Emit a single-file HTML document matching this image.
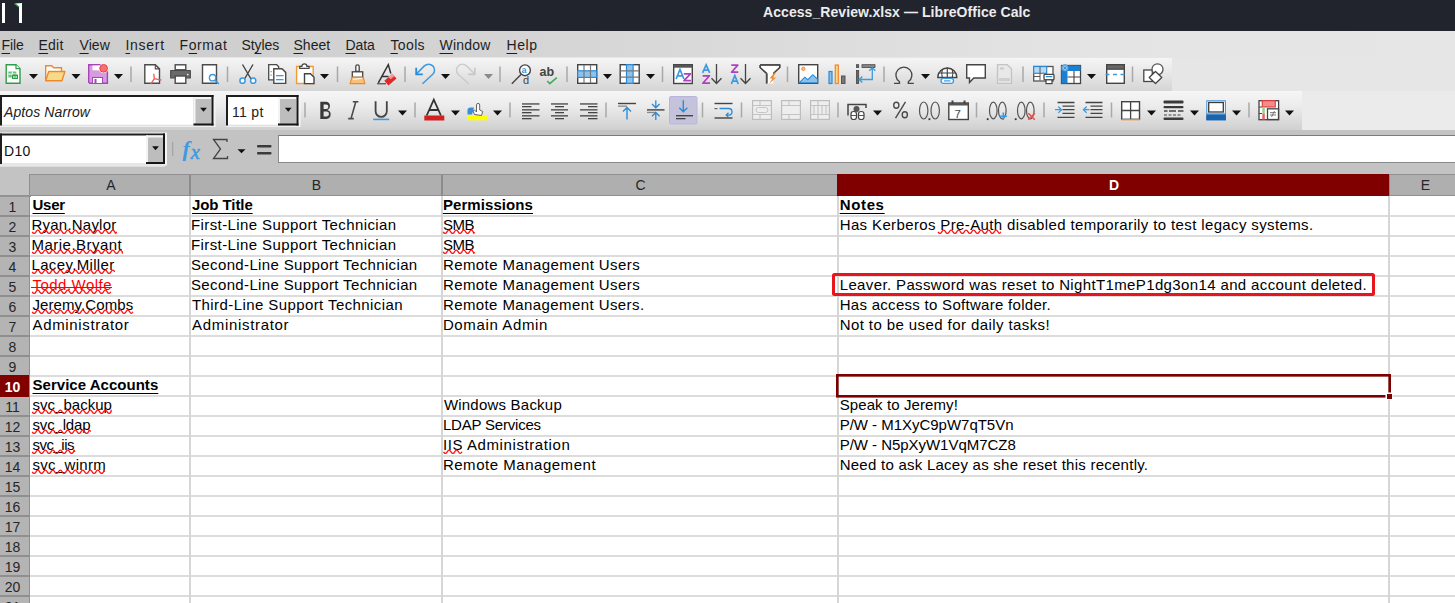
<!DOCTYPE html><html><head><meta charset="utf-8"><style>
html,body{margin:0;padding:0;width:1455px;height:603px;overflow:hidden;background:#fff;font-family:"Liberation Sans", sans-serif;}
</style></head><body>
<div style="position:absolute;left:0px;top:0px;width:1455px;height:31px;background:#21242d"></div><svg style="position:absolute;left:0;top:0" width="30" height="30"><rect x="2" y="3" width="3" height="20" fill="#fff"/><path d="M15 3.5 L22 3 L22 23 L19 23 L19 7 Z" fill="#fff"/><path d="M14.5 3.5 L19 7" stroke="#3a9a4a" stroke-width="1.2"/></svg><div style="position:absolute;left:763px;top:3.2px;white-space:pre;font-size:14px;line-height:18px;color:#ececec;font-weight:bold;letter-spacing:0.07px;">Access_Review.xlsx — LibreOffice Calc</div><div style="position:absolute;left:0px;top:31px;width:1455px;height:27px;background:linear-gradient(to right,#cbcbcb 0%,#d6d6d6 40%,#e4e4e4 75%,#e6e6e6 100%)"></div><div style="position:absolute;left:1.5px;top:36.2px;white-space:pre;font-size:14px;line-height:18px;color:#1e1e1e;font-weight:normal;letter-spacing:-0.1px;"><u style="text-underline-offset:2.5px;text-decoration-thickness:1.3px">F</u>ile</div><div style="position:absolute;left:38.5px;top:36.2px;white-space:pre;font-size:14px;line-height:18px;color:#1e1e1e;font-weight:normal;letter-spacing:0.233px;"><u style="text-underline-offset:2.5px;text-decoration-thickness:1.3px">E</u>dit</div><div style="position:absolute;left:79.5px;top:36.2px;white-space:pre;font-size:14px;line-height:18px;color:#1e1e1e;font-weight:normal;letter-spacing:0.067px;"><u style="text-underline-offset:2.5px;text-decoration-thickness:1.3px">V</u>iew</div><div style="position:absolute;left:125.5px;top:36.2px;white-space:pre;font-size:14px;line-height:18px;color:#1e1e1e;font-weight:normal;letter-spacing:0.7px;"><u style="text-underline-offset:2.5px;text-decoration-thickness:1.3px">I</u>nsert</div><div style="position:absolute;left:179.5px;top:36.2px;white-space:pre;font-size:14px;line-height:18px;color:#1e1e1e;font-weight:normal;letter-spacing:0.6px;">F<u style="text-underline-offset:2.5px;text-decoration-thickness:1.3px">o</u>rmat</div><div style="position:absolute;left:241.5px;top:36.2px;white-space:pre;font-size:14px;line-height:18px;color:#1e1e1e;font-weight:normal;letter-spacing:-0.1px;">St<u style="text-underline-offset:2.5px;text-decoration-thickness:1.3px">y</u>les</div><div style="position:absolute;left:293.5px;top:36.2px;white-space:pre;font-size:14px;line-height:18px;color:#1e1e1e;font-weight:normal;letter-spacing:0.0px;"><u style="text-underline-offset:2.5px;text-decoration-thickness:1.3px">S</u>heet</div><div style="position:absolute;left:345.5px;top:36.2px;white-space:pre;font-size:14px;line-height:18px;color:#1e1e1e;font-weight:normal;letter-spacing:-0.068px;"><u style="text-underline-offset:2.5px;text-decoration-thickness:1.3px">D</u>ata</div><div style="position:absolute;left:390.5px;top:36.2px;white-space:pre;font-size:14px;line-height:18px;color:#1e1e1e;font-weight:normal;letter-spacing:0.35px;"><u style="text-underline-offset:2.5px;text-decoration-thickness:1.3px">T</u>ools</div><div style="position:absolute;left:439.5px;top:36.2px;white-space:pre;font-size:14px;line-height:18px;color:#1e1e1e;font-weight:normal;letter-spacing:0.2px;"><u style="text-underline-offset:2.5px;text-decoration-thickness:1.3px">W</u>indow</div><div style="position:absolute;left:506.5px;top:36.2px;white-space:pre;font-size:14px;line-height:18px;color:#1e1e1e;font-weight:normal;letter-spacing:0.567px;"><u style="text-underline-offset:2.5px;text-decoration-thickness:1.3px">H</u>elp</div><div style="position:absolute;left:0px;top:57px;width:1455px;height:34px;background:#e6e6e6"></div><div style="position:absolute;left:0px;top:58px;width:1172px;height:33px;background:linear-gradient(#f5f5f5,#e9e9e9 40%,#d5d5d5)"></div><div style="position:absolute;left:0px;top:91px;width:1455px;height:39px;background:#ebebeb"></div><div style="position:absolute;left:0px;top:91px;width:1302px;height:39px;background:linear-gradient(#f6f6f6,#ebebeb 40%,#d0d0d0)"></div><div style="position:absolute;left:0px;top:130px;width:1455px;height:45px;background:#c3c3c3"></div><div style="position:absolute;left:0px;top:164px;width:165px;height:3px;background:#dcdcdc"></div><div style="position:absolute;left:278px;top:135px;width:1182px;height:28px;background:#fff;border:1px solid #8a8a8a;border-top:1.5px solid #7a7a7a;box-sizing:border-box"></div><svg style="position:absolute;left:0;top:0" width="1455" height="175"><path d="M6.2 64.7h9.8l4 4v14.6h-13.8z" fill="#fff" stroke="#2e9c49" stroke-width="1.4"/><path d="M16 64.7v4h4" fill="#fff" stroke="#2e9c49" stroke-width="1.2"/><rect x="8.3" y="71.5" width="8" height="6" fill="#6fbf7f"/><rect x="8.3" y="73.6" width="8" height="1" fill="#fff"/><rect x="11.8" y="71.5" width="1" height="6" fill="#fff"/><rect x="12" y="74.5" width="6" height="4.5" rx="0.5" fill="#2e9c49"/><rect x="13.3" y="76" width="1.2" height="2" fill="#cfe"/><rect x="15.5" y="76" width="1.2" height="2" fill="#cfe"/><path d="M29 74h9l-4.5 5z" fill="#111"/><path d="M45.7 80.8V65.8h6l2 2h7.8v3.5" fill="#fff" stroke="#f0882a" stroke-width="1.4"/><path d="M45.7 80.8l3-9.3h16.2l-3 9.3z" fill="#f7d98a" stroke="#f0882a" stroke-width="1.4" stroke-linejoin="round"/><path d="M71.5 74h9l-4.5 5z" fill="#111"/><path d="M88.7 64.7h16.5l2.2 2.2v16.4h-17.5l-1.2-1.2z" fill="#d79be0" stroke="#a545b8" stroke-width="1.4"/><rect x="92.5" y="65.5" width="7.5" height="4.8" fill="#fff"/><rect x="92.5" y="77.5" width="10" height="6" fill="#fff" stroke="#a545b8" stroke-width="1"/><rect x="94.5" y="79" width="2" height="4.5" fill="#a545b8"/><circle cx="103.6" cy="68.3" r="4.9" fill="#fff"/><circle cx="103.6" cy="68.3" r="3.9" fill="#f47070" stroke="#e83a3a" stroke-width="0.9"/><path d="M114 74h9l-4.5 5z" fill="#111"/><rect x="130.25" y="66.5" width="1.5" height="15.5" fill="#a9a9a9"/><path d="M144.8 64.7h10.5l4.2 4.2v14.4h-14.7z" fill="#fff" stroke="#4a4a4a" stroke-width="1.4"/><path d="M155.3 64.7v4.2h4.2" fill="none" stroke="#4a4a4a" stroke-width="1.1"/><path d="M150.8 84.2l3.5-5.5M154.3 78.7l-0.5-5M154.3 78.7l7.2 1.5" stroke="#ee5a5a" stroke-width="1.3" fill="none"/><rect x="175.2" y="64.8" width="10.6" height="5" fill="#fff" stroke="#4a4a4a" stroke-width="1.4"/><path d="M170.7 70.5h19.6v7.5h-19.6z" fill="#6a6a6a" stroke="#4a4a4a" stroke-width="1.2" stroke-linejoin="round"/><rect x="175.2" y="76" width="10.6" height="7.3" fill="#fff" stroke="#4a4a4a" stroke-width="1.4"/><rect x="187" y="74" width="1.5" height="1.2" fill="#fff"/><path d="M202.5 64.8h14v18.5h-14z" fill="#fff" stroke="#4a4a4a" stroke-width="1.4"/><circle cx="212.6" cy="77.7" r="3.2" fill="#fff" stroke="#3b9ae0" stroke-width="1.4"/><path d="M215 80.2l3.8 3.6" stroke="#3b9ae0" stroke-width="1.6"/><rect x="226.75" y="66.5" width="1.5" height="15.5" fill="#a9a9a9"/><path d="M242.5 64.5L251 79M253 64.5L244.5 79" stroke="#444" stroke-width="1.4" fill="none"/><circle cx="242.5" cy="80.7" r="2.6" fill="#fff" stroke="#3b9ae0" stroke-width="1.5"/><circle cx="253.2" cy="80.7" r="2.6" fill="#fff" stroke="#3b9ae0" stroke-width="1.5"/><path d="M268.7 64.7h8l2 2v13.2h-10z" fill="#fff" stroke="#4a4a4a" stroke-width="1.3"/><path d="M273.8 68.7h8.2l3.7 3.7v11h-11.9z" fill="#fff" stroke="#4a4a4a" stroke-width="1.4"/><rect x="270.5" y="71" width="1.2" height="1.2" fill="#3b9ae0"/><rect x="270.5" y="74.5" width="1.2" height="1.2" fill="#3b9ae0"/><rect x="276" y="75" width="7.5" height="1.3" fill="#3b9ae0"/><rect x="276" y="79" width="7.5" height="1.3" fill="#3b9ae0"/><path d="M296.6 66.5h16.6v17h-16.6z" fill="#fff" stroke="#f39a35" stroke-width="1.4"/><path d="M299.7 68.3h9.4v-2h-2.2a2.3 2.3 0 0 0-5 0h-2.2z" fill="#fff" stroke="#444" stroke-width="1.2"/><path d="M304.5 73.8h6l3.5 3.5v6.3h-9.5z" fill="#fff" stroke="#444" stroke-width="1.4"/><path d="M320 74h9l-4.5 5z" fill="#111"/><rect x="336.75" y="66.5" width="1.5" height="15.5" fill="#a9a9a9"/><path d="M355.8 71.5v-5a1.7 1.7 0 0 1 3.4 0v5z" fill="#fff" stroke="#444" stroke-width="1.3"/><rect x="352.3" y="71.8" width="10.4" height="5.5" fill="#fff" stroke="#444" stroke-width="1.3"/><path d="M351.8 77.3h11.5l1.6 6.3h-14.8z" fill="#f8c07a" stroke="#f0882a" stroke-width="1.1"/><path d="M353 79.3l9-0.8" stroke="#fff" stroke-width="1"/><path d="M378.3 82.8L388.3 64.6L390.8 73.5M382 76.5h6.5" stroke="#333" stroke-width="1.5" fill="none"/><rect x="377" y="83.3" width="9" height="1" fill="#333"/><path d="M384.3 80.8l8-6.8 4.2 4.6-8 6.8z" fill="#dd2a2a"/><path d="M388.5 77l4-3.2 2 2.3-4 3.2z" fill="#f59a9a"/><rect x="404.25" y="66.5" width="1.5" height="15.5" fill="#a9a9a9"/><path d="M416.2 74.1L424.4 65.9A5.9 5.9 0 0 1 432.8 74.3L422.5 83.8" fill="none" stroke="#3b9ae0" stroke-width="1.5"/><path d="M416.2 67.7v6.7h6.6" fill="none" stroke="#2b8ad6" stroke-width="1.8"/><path d="M441 74h9l-4.5 5z" fill="#111"/><path d="M474.8 74.1L466.6 65.9A5.9 5.9 0 0 0 458.2 74.3L468.5 83.8" fill="none" stroke="#cacaca" stroke-width="1.4"/><path d="M474.8 67.7v6.7h-6.6" fill="none" stroke="#c6c6c6" stroke-width="1.6"/><path d="M484 74h9l-4.5 5z" fill="#8a8a8a"/><rect x="499.25" y="66.5" width="1.5" height="15.5" fill="#a9a9a9"/><circle cx="525" cy="70.3" r="5.4" fill="#fff" stroke="#444" stroke-width="1.4"/><path d="M521 74.5l-9.2 9.2" stroke="#444" stroke-width="1.4"/><text x="521.6" y="73.3" font-size="9" font-family="Liberation Sans" fill="#3b9ae0" font-weight="bold">a</text><text x="523" y="84" font-size="11" font-family="Liberation Sans" fill="#444">d</text><text x="539.5" y="76" font-size="12.5" font-family="Liberation Sans" fill="#444" font-weight="bold">ab</text><path d="M547.2 81l2.6 2.6 7-6" fill="none" stroke="#3dae5a" stroke-width="1.6"/><rect x="566.25" y="66.5" width="1.5" height="15.5" fill="#a9a9a9"/><rect x="577.7" y="64.7" width="19" height="18.6" fill="#fff" stroke="#444" stroke-width="1.4"/><rect x="577.7" y="70.8" width="19" height="6.6" fill="#8cc3ec" stroke="#2b8ad6" stroke-width="1.2"/><path d="M584 65v18M590.5 65v18" stroke="#777" stroke-width="1.2"/><path d="M603 74h9l-4.5 5z" fill="#111"/><rect x="620.2" y="64.7" width="19" height="18.6" fill="#fff" stroke="#444" stroke-width="1.4"/><rect x="626.5" y="64.7" width="6.6" height="18.6" fill="#8cc3ec" stroke="#2b8ad6" stroke-width="1.2"/><path d="M620.5 70.8h18.5M620.5 77.2h18.5" stroke="#777" stroke-width="1.2"/><path d="M646 74h9l-4.5 5z" fill="#111"/><rect x="661.75" y="66.5" width="1.5" height="15.5" fill="#a9a9a9"/><rect x="673.7" y="64.7" width="18.6" height="18.8" fill="#fff" stroke="#444" stroke-width="1.4"/><rect x="673.7" y="64.7" width="18.6" height="3" fill="#555"/><path d="M676.1 79L680.0 69.5L683.9 79M677.66 75.8H682.34" fill="none" stroke="#3b9ae0" stroke-width="1.7"/><path d="M683.8 73.8H690.5L684.0 80.7H691" fill="none" stroke="#b040c0" stroke-width="1.7" stroke-linejoin="round"/><path d="M702.6 72.8L706.15 64.8L709.6999999999999 72.8M703.992 70.08H708.308" fill="none" stroke="#3b9ae0" stroke-width="1.7"/><path d="M702.5999999999999 75.8H709.5L702.8 83.2H710" fill="none" stroke="#b040c0" stroke-width="1.7" stroke-linejoin="round"/><path d="M716.5 64v19.5M711.5 78.3l5 5.2 5-5.2" fill="none" stroke="#444" stroke-width="1.3"/><path d="M731.3 65.1H737.8L731.5 72.2H738.3" fill="none" stroke="#b040c0" stroke-width="1.7" stroke-linejoin="round"/><path d="M731.4 84L734.8 75.5L738.1999999999999 84M732.7199999999999 81.12H736.88" fill="none" stroke="#3b9ae0" stroke-width="1.7"/><path d="M745.5 64v19.5M740.5 78.3l5 5.2 5-5.2" fill="none" stroke="#444" stroke-width="1.3"/><path d="M760.2 65h19.5v2.5l-6.5 6M766.5 73.5L760.2 67.5v-2.5M766.5 73.5v10" fill="#fff" stroke="#444" stroke-width="1.4" stroke-linejoin="round"/><path d="M760.5 65.5h19v2l-6.3 6v10h-6.4v-10l-6.3-6z" fill="#fff"/><path d="M760.2 65h19.5v2.5l-6.5 6M767 73.5l-6.8-6v-2.5M767 73.5v10" fill="none" stroke="#444" stroke-width="1.4"/><path d="M774.5 72.5l-5 6h3l-3.5 5.5 7-6.5h-3l3-5z" fill="#f08a2a"/><rect x="786.75" y="66.5" width="1.5" height="15.5" fill="#a9a9a9"/><rect x="798.7" y="64.7" width="19" height="18.6" fill="#fff" stroke="#444" stroke-width="1.4"/><circle cx="803.3" cy="68.8" r="1.7" fill="#f8c07a" stroke="#f0882a" stroke-width="0.9"/><path d="M799.3 82.7l5.5-5.5 3 2.5 5-5 4.8 4.6v3.4z" fill="#8cc3ec" stroke="#2b8ad6" stroke-width="1.1"/><rect x="829" y="71.5" width="3" height="12" fill="#8cc3ec" stroke="#2b8ad6" stroke-width="1.2"/><rect x="835.3" y="65" width="3" height="18.5" fill="#f8d890" stroke="#f0882a" stroke-width="1.2"/><rect x="841.5" y="76" width="3.5" height="7.5" fill="#777" stroke="#555" stroke-width="1"/><rect x="856.5" y="64.7" width="2.2" height="2.8" fill="#666" stroke="#444" stroke-width="0.8"/><rect x="856.5" y="70.5" width="2.2" height="13" fill="#666" stroke="#444" stroke-width="0.8"/><rect x="862" y="64.7" width="13" height="2.8" fill="#888" stroke="#444" stroke-width="0.8"/><path d="M872.3 68v11.5h-12M869.3 70.8l3-3 3 3M862.3 76.5l-3 3 3 3" fill="none" stroke="#3b9ae0" stroke-width="1.3"/><rect x="883.25" y="66.5" width="1.5" height="15.5" fill="#a9a9a9"/><path d="M894 83.3h5.5v-1.5a8 8 0 1 1 8.8 0v1.5h5.5" fill="none" stroke="#444" stroke-width="1.3"/><path d="M921 74h9l-4.5 5z" fill="#111"/><path d="M937.8 77.5a9.5 9.5 0 0 1 19 0z" fill="#fff" stroke="#444" stroke-width="1.4"/><path d="M947.3 67.8v9.5M942.3 69.5a15 15 0 0 0 0 8M952.3 69.5a15 15 0 0 1 0 8M938.5 73h17.6" stroke="#444" stroke-width="1.2" fill="none"/><rect x="941" y="78.3" width="12.5" height="5" rx="2.5" fill="#fff" stroke="#3b9ae0" stroke-width="1.3"/><rect x="944" y="80.3" width="6.5" height="1.2" fill="#3b9ae0"/><path d="M966.7 64.7h18.6v13.3h-11.5l-4.3 4.5v-4.5h-2.8z" fill="#fff" stroke="#444" stroke-width="1.4"/><path d="M997.5 64.7h9.8l4.2 4.2v14.4h-14z" fill="#e8e8e8" stroke="#c3c3c3" stroke-width="1.3"/><rect x="1000" y="67.5" width="4" height="2" fill="#c9c9c9"/><rect x="999.5" y="78.5" width="10" height="2.3" fill="#d0d0d0" stroke="#c9c9c9" stroke-width="0.7"/><rect x="1022.25" y="66.5" width="1.5" height="15.5" fill="#a9a9a9"/><rect x="1033.7" y="66.5" width="19.3" height="14.5" fill="#fff" stroke="#555" stroke-width="1.3"/><rect x="1033.7" y="66.5" width="13" height="6.8" fill="#bcd9f0" stroke="#2b8ad6" stroke-width="1.2"/><path d="M1034 76.5h6M1040 66.5v14" stroke="#555" stroke-width="1"/><rect x="1044" y="74.3" width="10" height="5.5" rx="1" fill="#fff" stroke="#444" stroke-width="1.3"/><rect x="1046" y="79.8" width="6" height="3.8" fill="#fff" stroke="#444" stroke-width="1.2"/><rect x="1045.8" y="76" width="6.5" height="1.2" fill="#2b8ad6"/><rect x="1061.5" y="65.5" width="19" height="18" fill="#fff" stroke="#444" stroke-width="1.3"/><rect x="1061.5" y="65.5" width="19" height="5.5" fill="#1d7fd0"/><rect x="1061.5" y="65.5" width="6" height="18" fill="#1d7fd0"/><path d="M1067.5 77h13M1074 71v12.5" stroke="#444" stroke-width="1.1"/><circle cx="1065" cy="68" r="3.3" fill="#bde0fa" stroke="#1d7fd0" stroke-width="0.8"/><path d="M1062 68h6M1065 65v6M1063 66l4 4M1067 66l-4 4" stroke="#1d7fd0" stroke-width="0.6"/><path d="M1087 74h9l-4.5 5z" fill="#111"/><rect x="1106.7" y="64.7" width="17.6" height="18.6" fill="#fff" stroke="#444" stroke-width="1.4"/><rect x="1106.7" y="64.7" width="17.6" height="4.5" fill="#666" stroke="#444" stroke-width="1.2"/><path d="M1105.5 74.5h20" stroke="#3b9ae0" stroke-width="1.4" stroke-dasharray="4 3.5"/><rect x="1131.75" y="66.5" width="1.5" height="15.5" fill="#a9a9a9"/><rect x="1143.8" y="70" width="8.5" height="11.5" fill="#fff" stroke="#444" stroke-width="1.3"/><circle cx="1157.5" cy="69.3" r="5.5" fill="#fff" stroke="#555" stroke-width="1.3"/><path d="M1155.5 71.5l6.3 6-6.3 6-6.3-6z" fill="#fff" stroke="#444" stroke-width="1.3" stroke-linejoin="round"/><rect x="0" y="94" width="215.5" height="33.0" fill="#f4f4f4"/><rect x="0" y="95" width="213.5" height="30.5" fill="#fff"/><rect x="0" y="124.7" width="213.5" height="1.6" fill="#e2e2e2"/><rect x="0" y="95" width="213.5" height="2" fill="#1e1e1e"/><rect x="0" y="95" width="2" height="30.5" fill="#1e1e1e"/><rect x="193.5" y="97" width="18.0" height="27.0" fill="#bdbdbd"/><rect x="193.5" y="97" width="2" height="26.5" fill="#f4f4f4"/><rect x="193.5" y="97" width="18.0" height="2" fill="#f4f4f4"/><rect x="211.5" y="95" width="2" height="30.5" fill="#161616"/><rect x="193.5" y="123.5" width="20.0" height="2" fill="#161616"/><path d="M200.1 107.75h6.8l-3.4 4z" fill="#111"/><rect x="226" y="94" width="74.5" height="33.0" fill="#f4f4f4"/><rect x="226" y="95" width="72.5" height="30.5" fill="#fff"/><rect x="226" y="124.7" width="72.5" height="1.6" fill="#e2e2e2"/><rect x="226" y="95" width="72.5" height="2" fill="#1e1e1e"/><rect x="226" y="95" width="2" height="30.5" fill="#1e1e1e"/><rect x="278" y="97" width="18.5" height="27.0" fill="#bdbdbd"/><rect x="278" y="97" width="2" height="26.5" fill="#f4f4f4"/><rect x="278" y="97" width="18.5" height="2" fill="#f4f4f4"/><rect x="296.5" y="95" width="2" height="30.5" fill="#161616"/><rect x="278" y="123.5" width="20.5" height="2" fill="#161616"/><path d="M284.85 107.75h6.8l-3.4 4z" fill="#111"/><rect x="304.25" y="102.5" width="1.5" height="15.0" fill="#a9a9a9"/><path d="M320.3 101.8h6.2a4.3 4.3 0 0 1 0.8 8.2a4.6 4.6 0 0 1 -0.8 9h-6.2z M323.6 104.6v4.4h2.6a2.2 2.2 0 0 0 0-4.4z M323.6 111.6v4.8h3a2.4 2.4 0 0 0 0-4.8z" fill="#3a3a3a" fill-rule="evenodd"/><path d="M352.8 101.8h5.6M348.2 118.6h5.6M355.8 101.8l-4.8 16.8" stroke="#4a4a4a" stroke-width="1.6" fill="none"/><path d="M375.6 101.3v10a5.6 5.6 0 0 0 11.2 0v-10" stroke="#444" stroke-width="1.8" fill="none"/><rect x="373.2" y="118.6" width="16" height="1.6" fill="#3b9ae0"/><path d="M398 110.5h9l-4.5 5z" fill="#111"/><rect x="414.25" y="102.5" width="1.5" height="15.0" fill="#a9a9a9"/><path d="M426.7 115.5l7.1-15.8 7.1 15.8M429.3 110h9" stroke="#333" stroke-width="1.8" fill="none"/><rect x="424.3" y="115.5" width="20" height="5" fill="#d21f1f"/><path d="M451 110.5h9l-4.5 5z" fill="#111"/><rect x="467.3" y="115" width="20" height="5.3" fill="#ffff00"/><path d="M467.5 114.5v-4a3 3 0 0 1 3-3h3.5l-2 7z" fill="#3b8ed6"/><path d="M474.5 114.5l-1.5-3.5 1.5-1 2 2v-7a1.6 1.6 0 0 1 3.2 0v5l3 1.5-1.2 4z" fill="#fff" stroke="#555" stroke-width="0.9"/><path d="M493 110.5h9l-4.5 5z" fill="#111"/><rect x="509.25" y="102.5" width="1.5" height="15.0" fill="#a9a9a9"/><rect x="522" y="103.3" width="17.5" height="1.3" fill="#444"/><rect x="522" y="106" width="9.5" height="1.3" fill="#444"/><rect x="522" y="109.2" width="17.5" height="1.3" fill="#444"/><rect x="522" y="112" width="9.5" height="1.3" fill="#444"/><rect x="522" y="115.2" width="17.5" height="1.3" fill="#444"/><rect x="522" y="118" width="9.5" height="1.3" fill="#444"/><rect x="551" y="103.3" width="17" height="1.3" fill="#444"/><rect x="555" y="106" width="9" height="1.3" fill="#444"/><rect x="551" y="109.2" width="17" height="1.3" fill="#444"/><rect x="555" y="112" width="9" height="1.3" fill="#444"/><rect x="551" y="115.2" width="17" height="1.3" fill="#444"/><rect x="555" y="118" width="9" height="1.3" fill="#444"/><rect x="580" y="103.3" width="17.5" height="1.3" fill="#444"/><rect x="588" y="106" width="9.5" height="1.3" fill="#444"/><rect x="580" y="109.2" width="17.5" height="1.3" fill="#444"/><rect x="588" y="112" width="9.5" height="1.3" fill="#444"/><rect x="580" y="115.2" width="17.5" height="1.3" fill="#444"/><rect x="588" y="118" width="9.5" height="1.3" fill="#444"/><rect x="605.25" y="102.5" width="1.5" height="15.0" fill="#a9a9a9"/><rect x="618" y="102.8" width="18" height="1.4" fill="#444"/><rect x="618" y="105.5" width="9" height="1.3" fill="#888"/><path d="M627 119.5v-12M623 111.5l4-4 4 4" stroke="#2b8ad6" stroke-width="1.4" fill="none"/><rect x="647" y="109.2" width="17.5" height="1.4" fill="#444"/><rect x="647" y="111.8" width="9" height="1.3" fill="#888"/><path d="M655.8 100.3v7.5M652 104l3.8 3.8 3.8-3.8M655.8 120v-7.5M652 116.3l3.8-3.8 3.8 3.8" stroke="#2b8ad6" stroke-width="1.3" fill="none"/><rect x="669.5" y="96.5" width="27.5" height="27.5" rx="1.5" fill="#c5c3dc" stroke="#b8b5dd" stroke-width="1"/><rect x="676" y="115" width="17" height="1.4" fill="#444"/><rect x="676" y="118" width="9.5" height="1.3" fill="#444"/><path d="M683.3 100.3v11.5M679.3 107.8l4 4 4-4" stroke="#2b8ad6" stroke-width="1.4" fill="none"/><rect x="701.75" y="102.5" width="1.5" height="15.0" fill="#a9a9a9"/><rect x="714.5" y="102.8" width="18" height="1.4" fill="#444"/><rect x="714.5" y="117.3" width="18" height="1.4" fill="#444"/><rect x="714.5" y="108" width="3" height="1.2" fill="#666"/><path d="M719.5 108.5h9.2a3.3 3.3 0 0 1 0 6.6h-2M728.5 112.8l-2.3 2.3 2.3 2.3" stroke="#2b8ad6" stroke-width="1.3" fill="none"/><rect x="740.75" y="102.5" width="1.5" height="15.0" fill="#a9a9a9"/><rect x="752.6" y="100.6" width="18.8" height="18.8" fill="#eee" stroke="#bdbdbd" stroke-width="1.2"/><path d="M753 105.5h18M753 114.5h18M760 100.6v5M760 114.5v5" stroke="#c4c4c4" stroke-width="1.1"/><rect x="756" y="107.5" width="12" height="5" rx="2.5" fill="none" stroke="#c4c4c4" stroke-width="1"/><rect x="781.6" y="100.6" width="18.8" height="18.8" fill="#eee" stroke="#bdbdbd" stroke-width="1.2"/><path d="M782 105.5h18M782 114.5h18M789 100.6v5M789 114.5v5" stroke="#c4c4c4" stroke-width="1.1"/><rect x="810.6" y="100.6" width="18.8" height="18.8" fill="#eee" stroke="#bdbdbd" stroke-width="1.2"/><path d="M811 105.5h18M811 114.5h18M818 100.6v19M814 105.5v9M822 105.5v9M826 105.5v9" stroke="#c4c4c4" stroke-width="1.1"/><rect x="837.25" y="102.5" width="1.5" height="15.0" fill="#a9a9a9"/><path d="M848 115.5v-11h18v3.5" fill="none" stroke="#444" stroke-width="1.5"/><circle cx="856.5" cy="109" r="3" fill="#555"/><rect x="851" y="111.5" width="5.5" height="8" rx="2.5" fill="#fff" stroke="#444" stroke-width="1.2"/><rect x="858.5" y="111.5" width="5.5" height="8" rx="2.5" fill="#fff" stroke="#444" stroke-width="1.2"/><path d="M851 115.5h5.5M858.5 115.5h5.5" stroke="#444" stroke-width="0.9"/><path d="M873 110.5h9l-4.5 5z" fill="#111"/><ellipse cx="896.3" cy="105.3" rx="2.6" ry="3" fill="none" stroke="#4a4a4a" stroke-width="1.4"/><ellipse cx="904.8" cy="114.7" rx="2.6" ry="3" fill="none" stroke="#4a4a4a" stroke-width="1.4"/><path d="M905.5 101.8L895.5 118.2" stroke="#4a4a4a" stroke-width="1.4"/><ellipse cx="923.7" cy="110.5" rx="4.2" ry="8.5" fill="none" stroke="#555" stroke-width="1.2"/><ellipse cx="935.2" cy="110.5" rx="4.2" ry="8.5" fill="none" stroke="#555" stroke-width="1.2"/><rect x="928.5" y="118.3" width="1.8" height="1.8" fill="#333"/><rect x="948.8" y="103" width="19.5" height="16.5" fill="#fff" stroke="#444" stroke-width="1.4"/><rect x="948.8" y="103" width="19.5" height="2.5" fill="#555"/><rect x="951.5" y="100.5" width="2" height="3.5" fill="#444"/><rect x="963.5" y="100.5" width="2" height="3.5" fill="#444"/><text x="954.5" y="118.2" font-size="11.5" font-family="Liberation Sans" fill="#444">7</text><rect x="975.75" y="102.5" width="1.5" height="15.0" fill="#a9a9a9"/><rect x="986.8" y="118.3" width="1.8" height="1.8" fill="#333"/><ellipse cx="993.3" cy="110.5" rx="3.8" ry="8.3" fill="none" stroke="#555" stroke-width="1.2"/><ellipse cx="1002.3" cy="110.5" rx="3.8" ry="8.3" fill="none" stroke="#555" stroke-width="1.2"/><path d="M1003.3 112.5v7.5M999.5 116.2h7.5" stroke="#3b9ae0" stroke-width="1.6"/><rect x="1014.8" y="118.3" width="1.8" height="1.8" fill="#333"/><ellipse cx="1021.3" cy="110.5" rx="3.8" ry="8.3" fill="none" stroke="#555" stroke-width="1.2"/><ellipse cx="1030.3" cy="110.5" rx="3.8" ry="8.3" fill="none" stroke="#555" stroke-width="1.2"/><path d="M1028.3 113.3l6.5 6.5M1034.8 113.3l-6.5 6.5" stroke="#ee4f4f" stroke-width="1.6"/><rect x="1043.25" y="102.5" width="1.5" height="15.0" fill="#a9a9a9"/><path d="M1057.5 102.5h17M1062.5 106.2h12M1062.5 109.7h12M1062.5 113.3h12M1057.5 117.3h17" stroke="#444" stroke-width="1.3"/><path d="M1055 109.7h6M1058.3 106.5l3.2 3.2-3.2 3.2" stroke="#3b9ae0" stroke-width="1.3" fill="none"/><path d="M1085.5 102.5h17M1090.5 106.2h12M1090.5 109.7h12M1090.5 113.3h12M1085.5 117.3h17" stroke="#444" stroke-width="1.3"/><path d="M1083.5 109.7h6M1086.7 106.5l-3.2 3.2 3.2 3.2" stroke="#3b9ae0" stroke-width="1.3" fill="none"/><rect x="1110.75" y="102.5" width="1.5" height="15.0" fill="#a9a9a9"/><rect x="1121.7" y="101.7" width="17.8" height="17.6" fill="#fff" stroke="#444" stroke-width="1.4"/><path d="M1130.6 101.7v17.6M1121.7 110.5h17.8" stroke="#444" stroke-width="1.3"/><rect x="1121.3" y="119" width="18.6" height="1.3" fill="#f0882a"/><path d="M1147 110.5h9l-4.5 5z" fill="#111"/><rect x="1163.5" y="100.5" width="20" height="3" rx="1" fill="#3a3a3a"/><rect x="1163.5" y="106" width="20" height="2.2" rx="1" fill="#3a3a3a"/><path d="M1164 111h3.5M1169 111h7M1178 111h4.5M1182.5 111h1" stroke="#444" stroke-width="1.3"/><path d="M1164 115h3M1168.5 115h3M1173 115h3M1177.5 115h3" stroke="#444" stroke-width="1"/><rect x="1163.5" y="117.5" width="20" height="2.5" rx="1" fill="#3a3a3a"/><path d="M1190 110.5h9l-4.5 5z" fill="#111"/><rect x="1206.3" y="100.3" width="19.6" height="20" fill="#3a8fd6"/><rect x="1207.3" y="101.3" width="17.6" height="12" fill="#fff"/><rect x="1208.7" y="102.5" width="14.6" height="9.5" fill="#fff" stroke="#3a3a3a" stroke-width="1.3"/><rect x="1206.3" y="115" width="19.6" height="5.3" fill="#1e63a8"/><path d="M1232 110.5h9l-4.5 5z" fill="#111"/><rect x="1248.25" y="102.5" width="1.5" height="15.0" fill="#a9a9a9"/><rect x="1259" y="100.7" width="19.6" height="19" fill="#fff" stroke="#444" stroke-width="1.3"/><rect x="1262.3" y="100.7" width="13" height="6.3" fill="#f58a8a" stroke="#e03c3c" stroke-width="1.1"/><rect x="1262.3" y="107" width="2.5" height="6.5" fill="#8ad68a"/><rect x="1262.3" y="113.5" width="2.5" height="6" fill="#f06060"/><path d="M1259 107h3M1259 113.5h3" stroke="#444" stroke-width="1"/><rect x="1267.5" y="108.8" width="11" height="10.7" fill="#fff" stroke="#444" stroke-width="1.3"/><path d="M1270 112.7h6M1270 115h6M1274.5 111l-3 6" stroke="#666" stroke-width="0.9"/><path d="M1285 110.5h9l-4.5 5z" fill="#111"/><rect x="0" y="132.5" width="167" height="33.0" fill="#f4f4f4"/><rect x="0" y="133.5" width="165" height="30.5" fill="#fff"/><rect x="0" y="163.2" width="165" height="1.6" fill="#e2e2e2"/><rect x="0" y="133.5" width="165" height="2" fill="#1e1e1e"/><rect x="0" y="133.5" width="2" height="30.5" fill="#1e1e1e"/><rect x="146" y="135.5" width="17" height="27.0" fill="#bdbdbd"/><rect x="146" y="135.5" width="2" height="26.5" fill="#f4f4f4"/><rect x="146" y="135.5" width="17" height="2" fill="#f4f4f4"/><rect x="163" y="133.5" width="2" height="30.5" fill="#161616"/><rect x="146" y="162" width="19" height="2" fill="#161616"/><path d="M152.1 146.25h6.8l-3.4 4z" fill="#111"/><rect x="172" y="142" width="1.3" height="14" fill="#a5a5a5"/><text x="182.5" y="155.8" font-size="22" font-family="Liberation Serif" font-style="italic" font-weight="bold" fill="#3b9ae0">f</text><text x="190.8" y="158.8" font-size="20.5" font-family="Liberation Serif" font-style="italic" fill="#3b9ae0" stroke="#3b9ae0" stroke-width="0.5">x</text><path d="M227 142v-2.5h-13.5l7 9.5-7 9.5h14v-2.5" fill="none" stroke="#444" stroke-width="1.3"/><path d="M237.5 149.3h8l-4 4z" fill="#111"/><rect x="257" y="145" width="14.5" height="2.6" rx="1" fill="#3a3a3a"/><rect x="257" y="152" width="14.5" height="2.6" rx="1" fill="#3a3a3a"/></svg><div style="position:absolute;left:4px;top:101.5px;white-space:pre;font-size:14px;line-height:20px;color:#222;font-weight:normal;letter-spacing:0.1px;font-style:italic;">Aptos Narrow</div><div style="position:absolute;left:232px;top:101.5px;white-space:pre;font-size:14px;line-height:20px;color:#222;font-weight:normal;letter-spacing:0.3px;">11 pt</div><div style="position:absolute;left:4px;top:140.5px;white-space:pre;font-size:14px;line-height:20px;color:#111;font-weight:normal;letter-spacing:0.3px;">D10</div><div style="position:absolute;left:0px;top:167px;width:1455px;height:29px;background:#c3c3c3"></div><div style="position:absolute;left:29px;top:174px;width:1426px;height:22px;background:#afafaf"></div><div style="position:absolute;left:29px;top:173.5px;width:1426px;height:1.5px;background:#8f8f8f"></div><div style="position:absolute;left:29px;top:195px;width:1426px;height:1.5px;background:#8f8f8f"></div><div style="position:absolute;left:189px;top:175px;width:1.5px;height:20px;background:#8c8c8c"></div><div style="position:absolute;left:441px;top:175px;width:1.5px;height:20px;background:#8c8c8c"></div><div style="position:absolute;left:837px;top:175px;width:1.5px;height:20px;background:#8c8c8c"></div><div style="position:absolute;left:1388px;top:175px;width:1.5px;height:20px;background:#8c8c8c"></div><div style="position:absolute;left:837px;top:174px;width:552px;height:22px;background:#800000"></div><div style="position:absolute;left:71.0px;top:175px;width:80px;text-align:center;font-size:14px;line-height:20px;color:#262626;font-weight:normal">A</div><div style="position:absolute;left:276.5px;top:175px;width:80px;text-align:center;font-size:14px;line-height:20px;color:#262626;font-weight:normal">B</div><div style="position:absolute;left:600.5px;top:175px;width:80px;text-align:center;font-size:14px;line-height:20px;color:#262626;font-weight:normal">C</div><div style="position:absolute;left:1074.0px;top:175px;width:80px;text-align:center;font-size:14px;line-height:20px;color:#fff;font-weight:bold">D</div><div style="position:absolute;left:1385.5px;top:175px;width:80px;text-align:center;font-size:14px;line-height:20px;color:#262626;font-weight:normal">E</div><div style="position:absolute;left:0px;top:196px;width:30px;height:407px;background:#b4b4b4"></div><div style="position:absolute;left:30.5px;top:196px;width:1424.5px;height:407px;background:#fff"></div><div style="position:absolute;left:-22.5px;top:197px;width:70px;text-align:center;font-size:14px;line-height:20px;color:#262626">1</div><div style="position:absolute;left:0px;top:215px;width:29.5px;height:1.5px;background:#8f8f8f"></div><div style="position:absolute;left:30px;top:215px;width:1425px;height:2px;background:#dcdcdc"></div><div style="position:absolute;left:-22.5px;top:217px;width:70px;text-align:center;font-size:14px;line-height:20px;color:#262626">2</div><div style="position:absolute;left:0px;top:235px;width:29.5px;height:1.5px;background:#8f8f8f"></div><div style="position:absolute;left:30px;top:235px;width:1425px;height:2px;background:#dcdcdc"></div><div style="position:absolute;left:-22.5px;top:237px;width:70px;text-align:center;font-size:14px;line-height:20px;color:#262626">3</div><div style="position:absolute;left:0px;top:255px;width:29.5px;height:1.5px;background:#8f8f8f"></div><div style="position:absolute;left:30px;top:255px;width:1425px;height:2px;background:#dcdcdc"></div><div style="position:absolute;left:-22.5px;top:257px;width:70px;text-align:center;font-size:14px;line-height:20px;color:#262626">4</div><div style="position:absolute;left:0px;top:275px;width:29.5px;height:1.5px;background:#8f8f8f"></div><div style="position:absolute;left:30px;top:275px;width:1425px;height:2px;background:#dcdcdc"></div><div style="position:absolute;left:-22.5px;top:277px;width:70px;text-align:center;font-size:14px;line-height:20px;color:#262626">5</div><div style="position:absolute;left:0px;top:295px;width:29.5px;height:1.5px;background:#8f8f8f"></div><div style="position:absolute;left:30px;top:295px;width:1425px;height:2px;background:#dcdcdc"></div><div style="position:absolute;left:-22.5px;top:297px;width:70px;text-align:center;font-size:14px;line-height:20px;color:#262626">6</div><div style="position:absolute;left:0px;top:315px;width:29.5px;height:1.5px;background:#8f8f8f"></div><div style="position:absolute;left:30px;top:315px;width:1425px;height:2px;background:#dcdcdc"></div><div style="position:absolute;left:-22.5px;top:317px;width:70px;text-align:center;font-size:14px;line-height:20px;color:#262626">7</div><div style="position:absolute;left:0px;top:335px;width:29.5px;height:1.5px;background:#8f8f8f"></div><div style="position:absolute;left:30px;top:335px;width:1425px;height:2px;background:#dcdcdc"></div><div style="position:absolute;left:-22.5px;top:337px;width:70px;text-align:center;font-size:14px;line-height:20px;color:#262626">8</div><div style="position:absolute;left:0px;top:355px;width:29.5px;height:1.5px;background:#8f8f8f"></div><div style="position:absolute;left:30px;top:355px;width:1425px;height:2px;background:#dcdcdc"></div><div style="position:absolute;left:-22.5px;top:357px;width:70px;text-align:center;font-size:14px;line-height:20px;color:#262626">9</div><div style="position:absolute;left:0px;top:375px;width:29.5px;height:1.5px;background:#8f8f8f"></div><div style="position:absolute;left:30px;top:375px;width:1425px;height:2px;background:#dcdcdc"></div><div style="position:absolute;left:0px;top:395px;width:29.5px;height:1.5px;background:#8f8f8f"></div><div style="position:absolute;left:30px;top:395px;width:1425px;height:2px;background:#dcdcdc"></div><div style="position:absolute;left:-22.5px;top:397px;width:70px;text-align:center;font-size:14px;line-height:20px;color:#262626">11</div><div style="position:absolute;left:0px;top:415px;width:29.5px;height:1.5px;background:#8f8f8f"></div><div style="position:absolute;left:30px;top:415px;width:1425px;height:2px;background:#dcdcdc"></div><div style="position:absolute;left:-22.5px;top:417px;width:70px;text-align:center;font-size:14px;line-height:20px;color:#262626">12</div><div style="position:absolute;left:0px;top:435px;width:29.5px;height:1.5px;background:#8f8f8f"></div><div style="position:absolute;left:30px;top:435px;width:1425px;height:2px;background:#dcdcdc"></div><div style="position:absolute;left:-22.5px;top:437px;width:70px;text-align:center;font-size:14px;line-height:20px;color:#262626">13</div><div style="position:absolute;left:0px;top:455px;width:29.5px;height:1.5px;background:#8f8f8f"></div><div style="position:absolute;left:30px;top:455px;width:1425px;height:2px;background:#dcdcdc"></div><div style="position:absolute;left:-22.5px;top:457px;width:70px;text-align:center;font-size:14px;line-height:20px;color:#262626">14</div><div style="position:absolute;left:0px;top:475px;width:29.5px;height:1.5px;background:#8f8f8f"></div><div style="position:absolute;left:30px;top:475px;width:1425px;height:2px;background:#dcdcdc"></div><div style="position:absolute;left:-22.5px;top:477px;width:70px;text-align:center;font-size:14px;line-height:20px;color:#262626">15</div><div style="position:absolute;left:0px;top:495px;width:29.5px;height:1.5px;background:#8f8f8f"></div><div style="position:absolute;left:30px;top:495px;width:1425px;height:2px;background:#dcdcdc"></div><div style="position:absolute;left:-22.5px;top:497px;width:70px;text-align:center;font-size:14px;line-height:20px;color:#262626">16</div><div style="position:absolute;left:0px;top:515px;width:29.5px;height:1.5px;background:#8f8f8f"></div><div style="position:absolute;left:30px;top:515px;width:1425px;height:2px;background:#dcdcdc"></div><div style="position:absolute;left:-22.5px;top:517px;width:70px;text-align:center;font-size:14px;line-height:20px;color:#262626">17</div><div style="position:absolute;left:0px;top:535px;width:29.5px;height:1.5px;background:#8f8f8f"></div><div style="position:absolute;left:30px;top:535px;width:1425px;height:2px;background:#dcdcdc"></div><div style="position:absolute;left:-22.5px;top:537px;width:70px;text-align:center;font-size:14px;line-height:20px;color:#262626">18</div><div style="position:absolute;left:0px;top:555px;width:29.5px;height:1.5px;background:#8f8f8f"></div><div style="position:absolute;left:30px;top:555px;width:1425px;height:2px;background:#dcdcdc"></div><div style="position:absolute;left:-22.5px;top:557px;width:70px;text-align:center;font-size:14px;line-height:20px;color:#262626">19</div><div style="position:absolute;left:0px;top:575px;width:29.5px;height:1.5px;background:#8f8f8f"></div><div style="position:absolute;left:30px;top:575px;width:1425px;height:2px;background:#dcdcdc"></div><div style="position:absolute;left:-22.5px;top:577px;width:70px;text-align:center;font-size:14px;line-height:20px;color:#262626">20</div><div style="position:absolute;left:0px;top:595px;width:29.5px;height:1.5px;background:#8f8f8f"></div><div style="position:absolute;left:30px;top:595px;width:1425px;height:2px;background:#dcdcdc"></div><div style="position:absolute;left:-22.5px;top:597px;width:70px;text-align:center;font-size:14px;line-height:20px;color:#262626">21</div><div style="position:absolute;left:28.9px;top:174px;width:1.6px;height:429px;background:#8f8f8f"></div><div style="position:absolute;left:0px;top:195px;width:29px;height:1.5px;background:#939393"></div><div style="position:absolute;left:0px;top:375.2px;width:29.2px;height:21.4px;background:#800000"></div><div style="position:absolute;left:-22.5px;top:377px;width:70px;text-align:center;font-size:14px;line-height:20px;color:#fff;font-weight:bold">10</div><div style="position:absolute;left:189px;top:196px;width:1.6px;height:407px;background:#d6d6d6"></div><div style="position:absolute;left:441px;top:196px;width:1.6px;height:407px;background:#d6d6d6"></div><div style="position:absolute;left:837px;top:196px;width:1.6px;height:407px;background:#d6d6d6"></div><div style="position:absolute;left:1388px;top:196px;width:1.6px;height:407px;background:#d6d6d6"></div><div style="position:absolute;left:32.5px;top:195px;white-space:pre;font-size:15px;line-height:20px;color:#000;font-weight:bold;letter-spacing:-0.268px;text-decoration:underline;text-underline-offset:2.5px;text-decoration-thickness:1.4px;">User</div><div style="position:absolute;left:192.0px;top:195px;white-space:pre;font-size:15px;line-height:20px;color:#000;font-weight:bold;letter-spacing:-0.081px;text-decoration:underline;text-underline-offset:2.5px;text-decoration-thickness:1.4px;">Job Title</div><div style="position:absolute;left:442.9px;top:195px;white-space:pre;font-size:15px;line-height:20px;color:#000;font-weight:bold;letter-spacing:0.08px;text-decoration:underline;text-underline-offset:2.5px;text-decoration-thickness:1.4px;">Permissions</div><div style="position:absolute;left:839.7px;top:195px;white-space:pre;font-size:15px;line-height:20px;color:#000;font-weight:bold;letter-spacing:0.65px;text-decoration:underline;text-underline-offset:2.5px;text-decoration-thickness:1.4px;">Notes</div><div style="position:absolute;left:31.5px;top:215px;white-space:pre;font-size:15px;line-height:20px;color:#000;font-weight:normal;letter-spacing:0.22px;">Ryan.Naylor</div><div style="position:absolute;left:191.0px;top:215px;white-space:pre;font-size:15px;line-height:20px;color:#000;font-weight:normal;letter-spacing:0.4px;">First-Line Support Technician</div><div style="position:absolute;left:442.9px;top:215px;white-space:pre;font-size:15px;line-height:20px;color:#000;font-weight:normal;letter-spacing:-0.4px;">SMB</div><div style="position:absolute;left:839.7px;top:215px;white-space:pre;font-size:15px;line-height:20px;color:#000;font-weight:normal;letter-spacing:0.37px;">Has Kerberos Pre-Auth disabled temporarily to test legacy systems.</div><div style="position:absolute;left:31.5px;top:235px;white-space:pre;font-size:15px;line-height:20px;color:#000;font-weight:normal;letter-spacing:0.474px;">Marie.Bryant</div><div style="position:absolute;left:191.0px;top:235px;white-space:pre;font-size:15px;line-height:20px;color:#000;font-weight:normal;letter-spacing:0.4px;">First-Line Support Technician</div><div style="position:absolute;left:442.9px;top:235px;white-space:pre;font-size:15px;line-height:20px;color:#000;font-weight:normal;letter-spacing:-0.4px;">SMB</div><div style="position:absolute;left:31.5px;top:255px;white-space:pre;font-size:15px;line-height:20px;color:#000;font-weight:normal;letter-spacing:0.343px;">Lacey.Miller</div><div style="position:absolute;left:191.0px;top:255px;white-space:pre;font-size:15px;line-height:20px;color:#000;font-weight:normal;letter-spacing:0.362px;">Second-Line Support Technician</div><div style="position:absolute;left:442.9px;top:255px;white-space:pre;font-size:15px;line-height:20px;color:#000;font-weight:normal;letter-spacing:0.418px;">Remote Management Users</div><div style="position:absolute;left:32.5px;top:275px;white-space:pre;font-size:15px;line-height:20px;color:#ff0000;font-weight:normal;letter-spacing:0.477px;">Todd.Wolfe</div><div style="position:absolute;left:191.0px;top:275px;white-space:pre;font-size:15px;line-height:20px;color:#000;font-weight:normal;letter-spacing:0.362px;">Second-Line Support Technician</div><div style="position:absolute;left:442.9px;top:275px;white-space:pre;font-size:15px;line-height:20px;color:#000;font-weight:normal;letter-spacing:0.418px;">Remote Management Users</div><div style="position:absolute;left:839.7px;top:275px;white-space:pre;font-size:15px;line-height:20px;color:#000;font-weight:normal;letter-spacing:0.368px;">Leaver. Password was reset to NightT1meP1dg3on14 and account deleted.</div><div style="position:absolute;left:32.5px;top:295px;white-space:pre;font-size:15px;line-height:20px;color:#000;font-weight:normal;letter-spacing:0.087px;">Jeremy.Combs</div><div style="position:absolute;left:192.0px;top:295px;white-space:pre;font-size:15px;line-height:20px;color:#000;font-weight:normal;letter-spacing:0.413px;">Third-Line Support Technician</div><div style="position:absolute;left:442.9px;top:295px;white-space:pre;font-size:15px;line-height:20px;color:#000;font-weight:normal;letter-spacing:0.41px;">Remote Management Users.</div><div style="position:absolute;left:839.7px;top:295px;white-space:pre;font-size:15px;line-height:20px;color:#000;font-weight:normal;letter-spacing:0.29px;">Has access to Software folder.</div><div style="position:absolute;left:32.5px;top:315px;white-space:pre;font-size:15px;line-height:20px;color:#000;font-weight:normal;letter-spacing:0.667px;">Administrator</div><div style="position:absolute;left:192.0px;top:315px;white-space:pre;font-size:15px;line-height:20px;color:#000;font-weight:normal;letter-spacing:0.686px;">Administrator</div><div style="position:absolute;left:442.9px;top:315px;white-space:pre;font-size:15px;line-height:20px;color:#000;font-weight:normal;letter-spacing:0.633px;">Domain Admin</div><div style="position:absolute;left:839.7px;top:315px;white-space:pre;font-size:15px;line-height:20px;color:#000;font-weight:normal;letter-spacing:0.412px;">Not to be used for daily tasks!</div><div style="position:absolute;left:32.5px;top:375px;white-space:pre;font-size:15px;line-height:20px;color:#000;font-weight:bold;letter-spacing:0.026px;text-decoration:underline;text-underline-offset:2.5px;text-decoration-thickness:1.4px;">Service Accounts</div><div style="position:absolute;left:32.5px;top:395px;white-space:pre;font-size:15px;line-height:20px;color:#000;font-weight:normal;letter-spacing:0.025px;">svc_backup</div><div style="position:absolute;left:443.9px;top:395px;white-space:pre;font-size:15px;line-height:20px;color:#000;font-weight:normal;letter-spacing:0.214px;">Windows Backup</div><div style="position:absolute;left:839.7px;top:395px;white-space:pre;font-size:15px;line-height:20px;color:#000;font-weight:normal;letter-spacing:0.095px;">Speak to Jeremy!</div><div style="position:absolute;left:32.5px;top:415px;white-space:pre;font-size:15px;line-height:20px;color:#000;font-weight:normal;letter-spacing:-0.172px;">svc_ldap</div><div style="position:absolute;left:442.9px;top:415px;white-space:pre;font-size:15px;line-height:20px;color:#000;font-weight:normal;letter-spacing:-0.201px;">LDAP Services</div><div style="position:absolute;left:839.7px;top:415px;white-space:pre;font-size:15px;line-height:20px;color:#000;font-weight:normal;letter-spacing:-0.021px;">P/W - M1XyC9pW7qT5Vn</div><div style="position:absolute;left:32.5px;top:435px;white-space:pre;font-size:15px;line-height:20px;color:#000;font-weight:normal;letter-spacing:-0.502px;">svc_iis</div><div style="position:absolute;left:442.9px;top:435px;white-space:pre;font-size:15px;line-height:20px;color:#000;font-weight:normal;letter-spacing:0.598px;">IIS Administration</div><div style="position:absolute;left:839.7px;top:435px;white-space:pre;font-size:15px;line-height:20px;color:#000;font-weight:normal;letter-spacing:-0.034px;">P/W - N5pXyW1VqM7CZ8</div><div style="position:absolute;left:32.5px;top:455px;white-space:pre;font-size:15px;line-height:20px;color:#000;font-weight:normal;letter-spacing:0.294px;">svc_winrm</div><div style="position:absolute;left:442.9px;top:455px;white-space:pre;font-size:15px;line-height:20px;color:#000;font-weight:normal;letter-spacing:0.526px;">Remote Management</div><div style="position:absolute;left:839.7px;top:455px;white-space:pre;font-size:15px;line-height:20px;color:#000;font-weight:normal;letter-spacing:0.249px;">Need to ask Lacey as she reset this recently.</div><div style="position:absolute;left:31px;top:286.6px;width:80.6px;height:1.3px;background:#ff0000"></div><svg style="position:absolute;left:0;top:0" width="1455" height="603"><g fill="none" stroke="#ff1010" stroke-width="1.3"><path d="M32.20 231.80 Q34.08 235.00 35.95 231.80 Q37.83 228.60 39.70 231.80 Q41.58 235.00 43.45 231.80 Q45.33 228.60 47.20 231.80 Q49.08 235.00 50.95 231.80 Q52.83 228.60 54.70 231.80 Q56.58 235.00 58.45 231.80 Q60.33 228.60 62.20 231.80 Q64.08 235.00 65.95 231.80 Q67.83 228.60 69.70 231.80 Q71.58 235.00 73.45 231.80 Q75.33 228.60 77.20 231.80 Q79.08 235.00 80.95 231.80 Q82.83 228.60 84.70 231.80 Q86.58 235.00 88.45 231.80 Q90.33 228.60 92.20 231.80 Q94.08 235.00 95.95 231.80 Q97.83 228.60 99.70 231.80 Q101.58 235.00 103.45 231.80 Q105.33 228.60 107.20 231.80 Q109.08 235.00 110.95 231.80 Q112.83 228.60 114.70 231.80 Q115.65 235.00 116.60 231.80"/><path d="M443.20 231.80 Q445.07 235.00 446.95 231.80 Q448.82 228.60 450.70 231.80 Q452.57 235.00 454.45 231.80 Q456.32 228.60 458.20 231.80 Q460.07 235.00 461.95 231.80 Q463.82 228.60 465.70 231.80 Q467.57 235.00 469.45 231.80 Q471.32 228.60 473.20 231.80 Q473.80 235.00 474.40 231.80"/><path d="M32.20 251.80 Q34.08 255.00 35.95 251.80 Q37.83 248.60 39.70 251.80 Q41.58 255.00 43.45 251.80 Q45.33 248.60 47.20 251.80 Q49.08 255.00 50.95 251.80 Q52.83 248.60 54.70 251.80 Q56.58 255.00 58.45 251.80 Q60.33 248.60 62.20 251.80 Q64.08 255.00 65.95 251.80 Q67.83 248.60 69.70 251.80 Q71.58 255.00 73.45 251.80 Q75.33 248.60 77.20 251.80 Q79.08 255.00 80.95 251.80 Q82.83 248.60 84.70 251.80 Q86.58 255.00 88.45 251.80 Q90.33 248.60 92.20 251.80 Q94.08 255.00 95.95 251.80 Q97.83 248.60 99.70 251.80 Q101.58 255.00 103.45 251.80 Q105.33 248.60 107.20 251.80 Q109.08 255.00 110.95 251.80 Q112.83 248.60 114.70 251.80 Q116.58 255.00 118.45 251.80 Q120.33 248.60 122.20 251.80 Q122.30 255.00 122.40 251.80"/><path d="M443.20 251.80 Q445.07 255.00 446.95 251.80 Q448.82 248.60 450.70 251.80 Q452.57 255.00 454.45 251.80 Q456.32 248.60 458.20 251.80 Q460.07 255.00 461.95 251.80 Q463.82 248.60 465.70 251.80 Q467.57 255.00 469.45 251.80 Q471.32 248.60 473.20 251.80 Q473.80 255.00 474.40 251.80"/><path d="M32.20 271.80 Q34.08 275.00 35.95 271.80 Q37.83 268.60 39.70 271.80 Q41.58 275.00 43.45 271.80 Q45.33 268.60 47.20 271.80 Q49.08 275.00 50.95 271.80 Q52.83 268.60 54.70 271.80 Q56.58 275.00 58.45 271.80 Q60.33 268.60 62.20 271.80 Q64.08 275.00 65.95 271.80 Q67.83 268.60 69.70 271.80 Q71.58 275.00 73.45 271.80 Q75.33 268.60 77.20 271.80 Q79.08 275.00 80.95 271.80 Q82.83 268.60 84.70 271.80 Q86.58 275.00 88.45 271.80 Q90.33 268.60 92.20 271.80 Q94.08 275.00 95.95 271.80 Q97.83 268.60 99.70 271.80 Q101.58 275.00 103.45 271.80 Q105.33 268.60 107.20 271.80 Q109.08 275.00 110.95 271.80 Q112.83 268.60 114.70 271.80"/><path d="M32.20 291.80 Q34.08 295.00 35.95 291.80 Q37.83 288.60 39.70 291.80 Q41.58 295.00 43.45 291.80 Q45.33 288.60 47.20 291.80 Q49.08 295.00 50.95 291.80 Q52.83 288.60 54.70 291.80 Q56.58 295.00 58.45 291.80 Q60.33 288.60 62.20 291.80 Q64.08 295.00 65.95 291.80 Q67.83 288.60 69.70 291.80 Q71.58 295.00 73.45 291.80 Q75.33 288.60 77.20 291.80 Q79.08 295.00 80.95 291.80 Q82.83 288.60 84.70 291.80 Q86.58 295.00 88.45 291.80 Q90.33 288.60 92.20 291.80 Q94.08 295.00 95.95 291.80 Q97.83 288.60 99.70 291.80 Q101.58 295.00 103.45 291.80 Q105.33 288.60 107.20 291.80 Q109.00 295.00 110.80 291.80"/><path d="M32.20 311.80 Q34.08 315.00 35.95 311.80 Q37.83 308.60 39.70 311.80 Q41.58 315.00 43.45 311.80 Q45.33 308.60 47.20 311.80 Q49.08 315.00 50.95 311.80 Q52.83 308.60 54.70 311.80 Q56.58 315.00 58.45 311.80 Q60.33 308.60 62.20 311.80 Q64.08 315.00 65.95 311.80 Q67.83 308.60 69.70 311.80 Q71.58 315.00 73.45 311.80 Q75.33 308.60 77.20 311.80 Q79.08 315.00 80.95 311.80 Q82.83 308.60 84.70 311.80 Q86.58 315.00 88.45 311.80 Q90.33 308.60 92.20 311.80 Q94.08 315.00 95.95 311.80 Q97.83 308.60 99.70 311.80 Q101.58 315.00 103.45 311.80 Q105.33 308.60 107.20 311.80 Q109.08 315.00 110.95 311.80 Q112.83 308.60 114.70 311.80 Q116.58 315.00 118.45 311.80 Q120.33 308.60 122.20 311.80 Q124.08 315.00 125.95 311.80 Q127.82 308.60 129.70 311.80 Q131.25 315.00 132.80 311.80"/><path d="M32.20 411.80 Q34.08 415.00 35.95 411.80 Q37.83 408.60 39.70 411.80 Q41.58 415.00 43.45 411.80 Q45.33 408.60 47.20 411.80 Q49.08 415.00 50.95 411.80 Q52.83 408.60 54.70 411.80 Q56.58 415.00 58.45 411.80 Q60.33 408.60 62.20 411.80 Q64.08 415.00 65.95 411.80 Q67.83 408.60 69.70 411.80 Q71.58 415.00 73.45 411.80 Q75.33 408.60 77.20 411.80 Q79.08 415.00 80.95 411.80 Q82.83 408.60 84.70 411.80 Q86.58 415.00 88.45 411.80 Q90.33 408.60 92.20 411.80 Q94.08 415.00 95.95 411.80 Q97.83 408.60 99.70 411.80 Q101.58 415.00 103.45 411.80 Q105.33 408.60 107.20 411.80 Q109.08 415.00 110.95 411.80 Q111.12 408.60 111.30 411.80"/><path d="M32.20 431.80 Q34.08 435.00 35.95 431.80 Q37.83 428.60 39.70 431.80 Q41.58 435.00 43.45 431.80 Q45.33 428.60 47.20 431.80 Q49.08 435.00 50.95 431.80 Q52.83 428.60 54.70 431.80 Q56.58 435.00 58.45 431.80 Q60.33 428.60 62.20 431.80 Q64.08 435.00 65.95 431.80 Q67.83 428.60 69.70 431.80 Q71.58 435.00 73.45 431.80 Q75.33 428.60 77.20 431.80 Q79.08 435.00 80.95 431.80 Q82.83 428.60 84.70 431.80 Q86.58 435.00 88.45 431.80 Q89.47 428.60 90.50 431.80"/><path d="M32.20 451.80 Q34.08 455.00 35.95 451.80 Q37.83 448.60 39.70 451.80 Q41.58 455.00 43.45 451.80 Q45.33 448.60 47.20 451.80 Q49.08 455.00 50.95 451.80 Q52.83 448.60 54.70 451.80 Q56.58 455.00 58.45 451.80 Q60.33 448.60 62.20 451.80 Q64.08 455.00 65.95 451.80 Q67.83 448.60 69.70 451.80 Q71.58 455.00 73.45 451.80 Q74.12 448.60 74.80 451.80"/><path d="M32.20 471.80 Q34.08 475.00 35.95 471.80 Q37.83 468.60 39.70 471.80 Q41.58 475.00 43.45 471.80 Q45.33 468.60 47.20 471.80 Q49.08 475.00 50.95 471.80 Q52.83 468.60 54.70 471.80 Q56.58 475.00 58.45 471.80 Q60.33 468.60 62.20 471.80 Q64.08 475.00 65.95 471.80 Q67.83 468.60 69.70 471.80 Q71.58 475.00 73.45 471.80 Q75.33 468.60 77.20 471.80 Q79.08 475.00 80.95 471.80 Q82.83 468.60 84.70 471.80 Q86.58 475.00 88.45 471.80 Q90.33 468.60 92.20 471.80 Q94.08 475.00 95.95 471.80 Q97.83 468.60 99.70 471.80 Q101.58 475.00 103.45 471.80 Q104.03 468.60 104.60 471.80"/><path d="M938.00 231.80 Q939.88 235.00 941.75 231.80 Q943.62 228.60 945.50 231.80 Q947.38 235.00 949.25 231.80 Q951.12 228.60 953.00 231.80 Q954.88 235.00 956.75 231.80 Q958.62 228.60 960.50 231.80 Q962.38 235.00 964.25 231.80 Q966.12 228.60 968.00 231.80 Q969.88 235.00 971.75 231.80 Q973.62 228.60 975.50 231.80 Q977.38 235.00 979.25 231.80 Q981.12 228.60 983.00 231.80 Q984.88 235.00 986.75 231.80 Q988.62 228.60 990.50 231.80 Q992.38 235.00 994.25 231.80 Q996.12 228.60 998.00 231.80 Q999.35 235.00 1000.70 231.80"/><path d="M443.50 451.80 Q445.38 455.00 447.25 451.80 Q449.12 448.60 451.00 451.80 Q452.88 455.00 454.75 451.80 Q456.62 448.60 458.50 451.80 Q460.25 455.00 462.00 451.80"/></g></svg><svg style="position:absolute;left:0;top:0" width="1455" height="603"><rect x="833.5" y="274.5" width="540" height="20" rx="1" fill="none" stroke="#e8141e" stroke-width="3"/><rect x="837.3" y="375.3" width="552.4" height="21" fill="none" stroke="#7d0000" stroke-width="2.6"/><rect x="1385.5" y="392.5" width="7" height="7" fill="#fff"/><rect x="1387" y="394" width="5" height="5" fill="#7d0000"/></svg>
</body></html>
